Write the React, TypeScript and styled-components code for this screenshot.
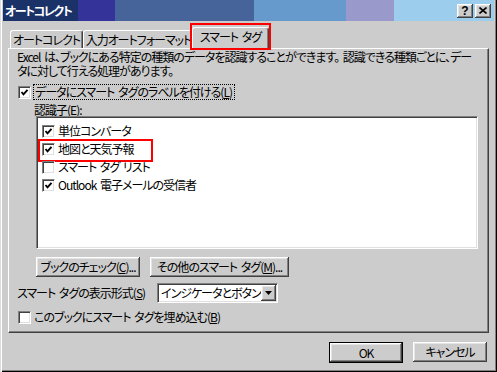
import React from "react";
import styled, { createGlobalStyle } from "styled-components";

const FACE = "#cccccc";
const FONT = `"Noto Sans CJK JP", "Liberation Sans", sans-serif`;

const Global = createGlobalStyle`
  html, body { margin: 0; padding: 0; background: ${FACE}; }
  * { box-sizing: border-box; }
  body { font-family: ${FONT}; font-size: 12px; color: #000; }
  u { text-decoration: underline; text-underline-offset: 1px; }
`;

const raised = `
  box-shadow: inset -1px -1px #404040, inset 1px 1px #ffffff,
    inset -2px -2px #808080, inset 2px 2px #e4e4e4;
`;

const Window = styled.div`
  position: relative;
  width: 497px;
  height: 372px;
  background: ${FACE};
  display: flex;
  flex-direction: column;
  padding: 0 3px 3px 3px;
  box-shadow: inset 1px 0 #dddddd, inset 2px 0 #ffffff, inset -1px -1px #000000,
    inset -2px -2px #808080;
  font-feature-settings: "palt";
  letter-spacing: -1px;
  word-spacing: 2px;
  line-height: 14px;
`;

const TitleBar = styled.div`
  height: 21px;
  display: flex;
  align-items: center;
  justify-content: space-between;
  padding: 0 3px 0 2px;
  background: linear-gradient(
    to right,
    #1a3268 0 75px,
    #333399 75px 112px,
    #466499 112px 251px,
    #6699cc 251px 343px,
    #9999cc 343px 391px,
    #9dcdec 391px 100%
  );
`;

const TitleText = styled.span`
  color: #ffffff;
  font-weight: bold;
  font-size: 12px;
  letter-spacing: -1.5px;
`;

const CaptionButtons = styled.div`
  display: flex;
  gap: 2px;
`;

const CaptionButton = styled.div`
  width: 16px;
  height: 14px;
  background: ${FACE};
  ${raised}
  display: flex;
  align-items: center;
  justify-content: center;
  font-family: "Liberation Sans", sans-serif;
  font-weight: bold;
  font-size: 12px;
  line-height: 14px;
  letter-spacing: 0;
  color: #000;
`;

const Body = styled.div`
  flex: 1;
  display: flex;
  flex-direction: column;
  padding: 0 5px;
`;

const TabStrip = styled.div`
  height: 21px;
  margin-top: 6px;
  display: flex;
  align-items: flex-end;
  padding-left: 2px;
  position: relative;
  z-index: 1;
`;

const Tab = styled.div<{ $active?: boolean; $w: number }>`
  position: relative;
  width: ${(p) => p.$w}px;
  height: ${(p) => (p.$active ? 22 : 18)}px;
  margin: 0 ${(p) => (p.$active ? -2 : 0)}px ${(p) => (p.$active ? -1 : 0)}px;
  z-index: ${(p) => (p.$active ? 2 : 1)};
  background: ${FACE};
  border-top: 1px solid #ffffff;
  border-left: 1px solid #ffffff;
  border-right: 1px solid #404040;
  border-radius: 3px 3px 0 0;
  box-shadow: inset -1px 0 #808080;
  display: flex;
  align-items: ${(p) => (p.$active ? "flex-start" : "center")};
  padding-top: ${(p) => (p.$active ? 2 : 0)}px;
  justify-content: center;
  white-space: nowrap;
`;

const TabMark = styled.div`
  position: absolute;
  left: -3px;
  right: -3px;
  top: -5px;
  bottom: -1px;
  border: 2px solid #ff0000;
  pointer-events: none;
`;

const Panel = styled.div`
  height: 285px;
  background: ${FACE};
  border-top: 1px solid #ffffff;
  border-left: 1px solid #ffffff;
  border-right: 1px solid #404040;
  border-bottom: 1px solid #404040;
  box-shadow: inset -1px -1px #808080;
  display: flex;
  flex-direction: column;
  padding-top: 1px;
`;

const Description = styled.p`
  margin: 0;
  padding-left: 8px;
  line-height: 14px;
  white-space: nowrap;
`;

const CheckRow = styled.label<{ $mt: number }>`
  display: flex;
  align-items: center;
  gap: 3px;
  height: 16px;
  margin-top: ${(p) => p.$mt}px;
  padding-left: 9px;
  white-space: nowrap;
`;

const FocusText = styled.span`
  outline: 1px dotted #000;
  outline-offset: 0;
  padding: 0 2px 0 1px;
`;

const Box = styled.span`
  flex: none;
  display: block;
  width: 13px;
  height: 13px;
  margin-top: 1px;
  background: #ffffff;
  border-top: 1px solid #808080;
  border-left: 1px solid #808080;
  border-right: 1px solid #ffffff;
  border-bottom: 1px solid #ffffff;
  box-shadow: inset 1px 1px #404040, inset -1px -1px #e0e0e0;
  svg {
    display: block;
    margin: 1px 0 0 1px;
  }
`;

const FieldLabel = styled.div`
  height: 12px;
  margin-top: 4px;
  padding-left: 25px;
  line-height: 12px;
`;

const ListBox = styled.div`
  margin: 0 10px 0 27px;
  height: 133px;
  background: #ffffff;
  border-top: 1px solid #808080;
  border-left: 1px solid #808080;
  border-right: 1px solid #ffffff;
  border-bottom: 1px solid #ffffff;
  box-shadow: inset 1px 1px #404040, inset -1px -1px #e0e0e0;
  padding: 5px 1px 0;
  display: flex;
  flex-direction: column;
`;

const ListItem = styled.div<{ $marked?: boolean }>`
  position: relative;
  flex: none;
  height: 18px;
  display: flex;
  align-items: center;
  gap: 3px;
  padding-left: 4px;
  white-space: nowrap;
  &::after {
    content: "";
    display: ${(p) => (p.$marked ? "block" : "none")};
    position: absolute;
    left: 0;
    top: -1px;
    width: 111px;
    height: 19px;
    border: 2px solid #ff0000;
  }
`;

const ButtonRow = styled.div`
  display: flex;
  gap: 10px;
  margin: 8px 0 0 27px;
`;

const Button = styled.div<{ $w: number; $default?: boolean }>`
  width: ${(p) => p.$w}px;
  height: ${(p) => (p.$default ? 21 : 20)}px;
  background: ${FACE};
  border: ${(p) => (p.$default ? "1px solid #000" : "none")};
  ${raised}
  display: flex;
  align-items: center;
  justify-content: center;
  white-space: nowrap;
`;

const SelectRow = styled.div`
  display: flex;
  align-items: center;
  height: 20px;
  margin-top: 6px;
  padding-left: 8px;
  white-space: nowrap;
`;

const SelectLabel = styled.span`
  width: 140px;
`;

const Combo = styled.div`
  width: 121px;
  height: 20px;
  background: #ffffff;
  border-top: 1px solid #808080;
  border-left: 1px solid #808080;
  border-right: 1px solid #ffffff;
  border-bottom: 1px solid #ffffff;
  box-shadow: inset 1px 1px #404040, inset -1px -1px #e0e0e0;
  display: flex;
  align-items: center;
  justify-content: space-between;
  padding: 1px 1px 1px 3px;
`;

const ComboArrow = styled.div`
  width: 16px;
  height: 16px;
  background: ${FACE};
  ${raised}
  display: flex;
  align-items: center;
  justify-content: center;
`;

const Footer = styled.div`
  display: flex;
  justify-content: flex-end;
  gap: 10px;
  margin-top: 9px;
  padding-right: 2px;
`;

const Check = ({ on }: { on?: boolean }) => (
  <Box>
    <svg width="9" height="9" viewBox="0 0 9 9">
      <path
        d="M1.5 4 L3.5 6.3 L7.5 1.8"
        fill="none"
        stroke={on ? "#000" : "none"}
        strokeWidth="1.9"
      />
    </svg>
  </Box>
);

export default function App() {
  return (
    <>
      <Global />
      <Window>
        <TitleBar>
          <TitleText>オートコレクト</TitleText>
          <CaptionButtons>
            <CaptionButton>?</CaptionButton>
            <CaptionButton>
              <svg width="8" height="7" viewBox="0 0 8 7">
                <path d="M0.5 0.5 L7.5 6.5 M7.5 0.5 L0.5 6.5" stroke="#000" strokeWidth="1.6" />
              </svg>
            </CaptionButton>
          </CaptionButtons>
        </TitleBar>
        <Body>
          <TabStrip>
            <Tab $w={73}>オートコレクト</Tab>
            <Tab $w={111}>入力オートフォーマット</Tab>
            <Tab $w={77} $active>
              スマート タグ
              <TabMark />
            </Tab>
          </TabStrip>
          <Panel>
            <Description>
              Excel は、ブックにある特定の種類のデータを認識することができます。 認識できる種類ごとに、デー
              <br />
              タに対して行える処理があります。
            </Description>
            <CheckRow $mt={6}>
              <Check on />
              <FocusText>
                データにスマート タグのラベルを付ける(<u>L</u>)
              </FocusText>
            </CheckRow>
            <FieldLabel>
              認識子(<u>E</u>):
            </FieldLabel>
            <ListBox>
              <ListItem>
                <Check on />
                単位コンバータ
              </ListItem>
              <ListItem $marked>
                <Check on />
                地図と天気予報
              </ListItem>
              <ListItem>
                <Check />
                スマート タグ リスト
              </ListItem>
              <ListItem>
                <Check on />
                Outlook 電子メールの受信者
              </ListItem>
            </ListBox>
            <ButtonRow>
              <Button $w={104}>
                ブックのチェック(<u>C</u>)...
              </Button>
              <Button $w={139}>
                その他のスマート タグ(<u>M</u>)...
              </Button>
            </ButtonRow>
            <SelectRow>
              <SelectLabel>
                スマート タグの表示形式(<u>S</u>)
              </SelectLabel>
              <Combo>
                <span>インジケータとボタン</span>
                <ComboArrow>
                  <svg width="7" height="4" viewBox="0 0 7 4">
                    <path d="M0 0 H7 L3.5 4 Z" fill="#000" />
                  </svg>
                </ComboArrow>
              </Combo>
            </SelectRow>
            <CheckRow $mt={6}>
              <Check />
              <span>
                このブックにスマート タグを埋め込む(<u>B</u>)
              </span>
            </CheckRow>
          </Panel>
          <Footer>
            <Button $w={74} $default>
              OK
            </Button>
            <Button $w={74}>キャンセル</Button>
          </Footer>
        </Body>
      </Window>
    </>
  );
}
